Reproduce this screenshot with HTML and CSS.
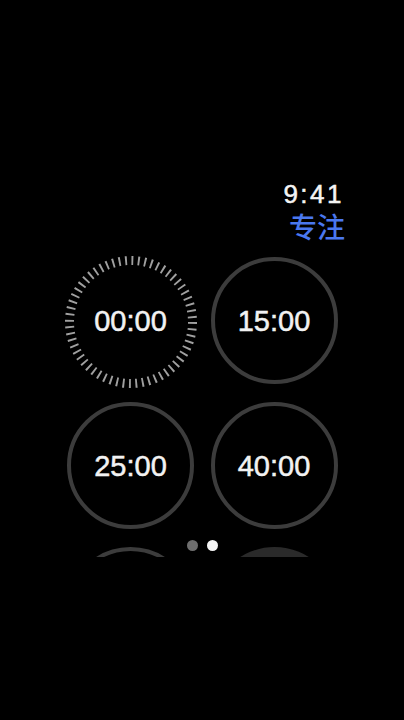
FILE: index.html
```html
<!DOCTYPE html>
<html lang="zh">
<head>
<meta charset="utf-8">
<title>专注</title>
<link rel="stylesheet" href="styles.css">
</head>
<body>
<div class="screen">
  <header class="status">
    <div class="time">9:41</div>
    <div class="title">专注</div>
  </header>
  <div class="grid">
    <div class="timer ticks">
      <svg class="tickring" viewBox="0 0 134 134" width="134" height="134" aria-hidden="true">
        <circle cx="67" cy="67" r="61.5" fill="none" stroke="#a0a0a0" stroke-width="9" stroke-dasharray="1.9 4.54"/>
      </svg>
      <span class="label">00:00</span>
    </div>
    <div class="timer ring"><span class="label">15:00</span></div>
    <div class="timer ring"><span class="label">25:00</span></div>
    <div class="timer ring"><span class="label">40:00</span></div>
    <div class="timer ring"></div>
    <div class="timer filled"></div>
  </div>
  <div class="dots"><span class="dot"></span><span class="dot on"></span></div>
</div>
</body>
</html>
```

FILE: styles.css
```css
html, body {
  margin: 0;
  padding: 0;
  background: #000;
}
body {
  width: 404px;
  height: 720px;
  font-family: "Liberation Sans", Arial, "Noto Sans CJK SC", sans-serif;
  color: #f2f2f2;
}
.screen {
  position: relative;
  box-sizing: border-box;
  margin-left: 60px;
  width: 286px;
  height: 557px;
  padding-top: 181px;
  overflow: hidden;
}
.status {
  text-align: right;
}
.time {
  font-size: 26px;
  line-height: 26px;
  letter-spacing: 2.5px;
  padding-right: 2px;
  color: #f4f4f4;
  -webkit-text-stroke: 0.5px #f4f4f4;
}
.title {
  margin-top: 4px;
  font-family: "Noto Sans CJK SC", sans-serif;
  font-weight: 500;
  font-size: 28px;
  line-height: 30px;
  color: #4a78f0;
  padding-right: 1px;
}
.grid {
  margin-top: 16px;
  padding-left: 7px;
  display: grid;
  grid-template-columns: 127px 127px;
  column-gap: 16.5px;
  row-gap: 18px;
}
.timer {
  position: relative;
  box-sizing: border-box;
  width: 127px;
  height: 127px;
  border-radius: 50%;
  display: flex;
  align-items: center;
  justify-content: center;
}
.ring {
  border: 4px solid #3c3c3c;
}
.filled {
  background: #2a2a2a;
}
.tickring {
  position: absolute;
  left: -3.5px;
  top: -2px;
}
.label {
  position: relative;
  top: 1px;
  font-size: 29px;
  line-height: 1;
  color: #f2f2f2;
  -webkit-text-stroke: 0.5px #f2f2f2;
}
.dots {
  position: absolute;
  top: 540px;
  left: 127px;
  display: flex;
  gap: 9px;
}
.dot {
  width: 11px;
  height: 11px;
  border-radius: 50%;
  background: #6e6e6e;
}
.dot.on {
  background: #f4f4f4;
}
```
